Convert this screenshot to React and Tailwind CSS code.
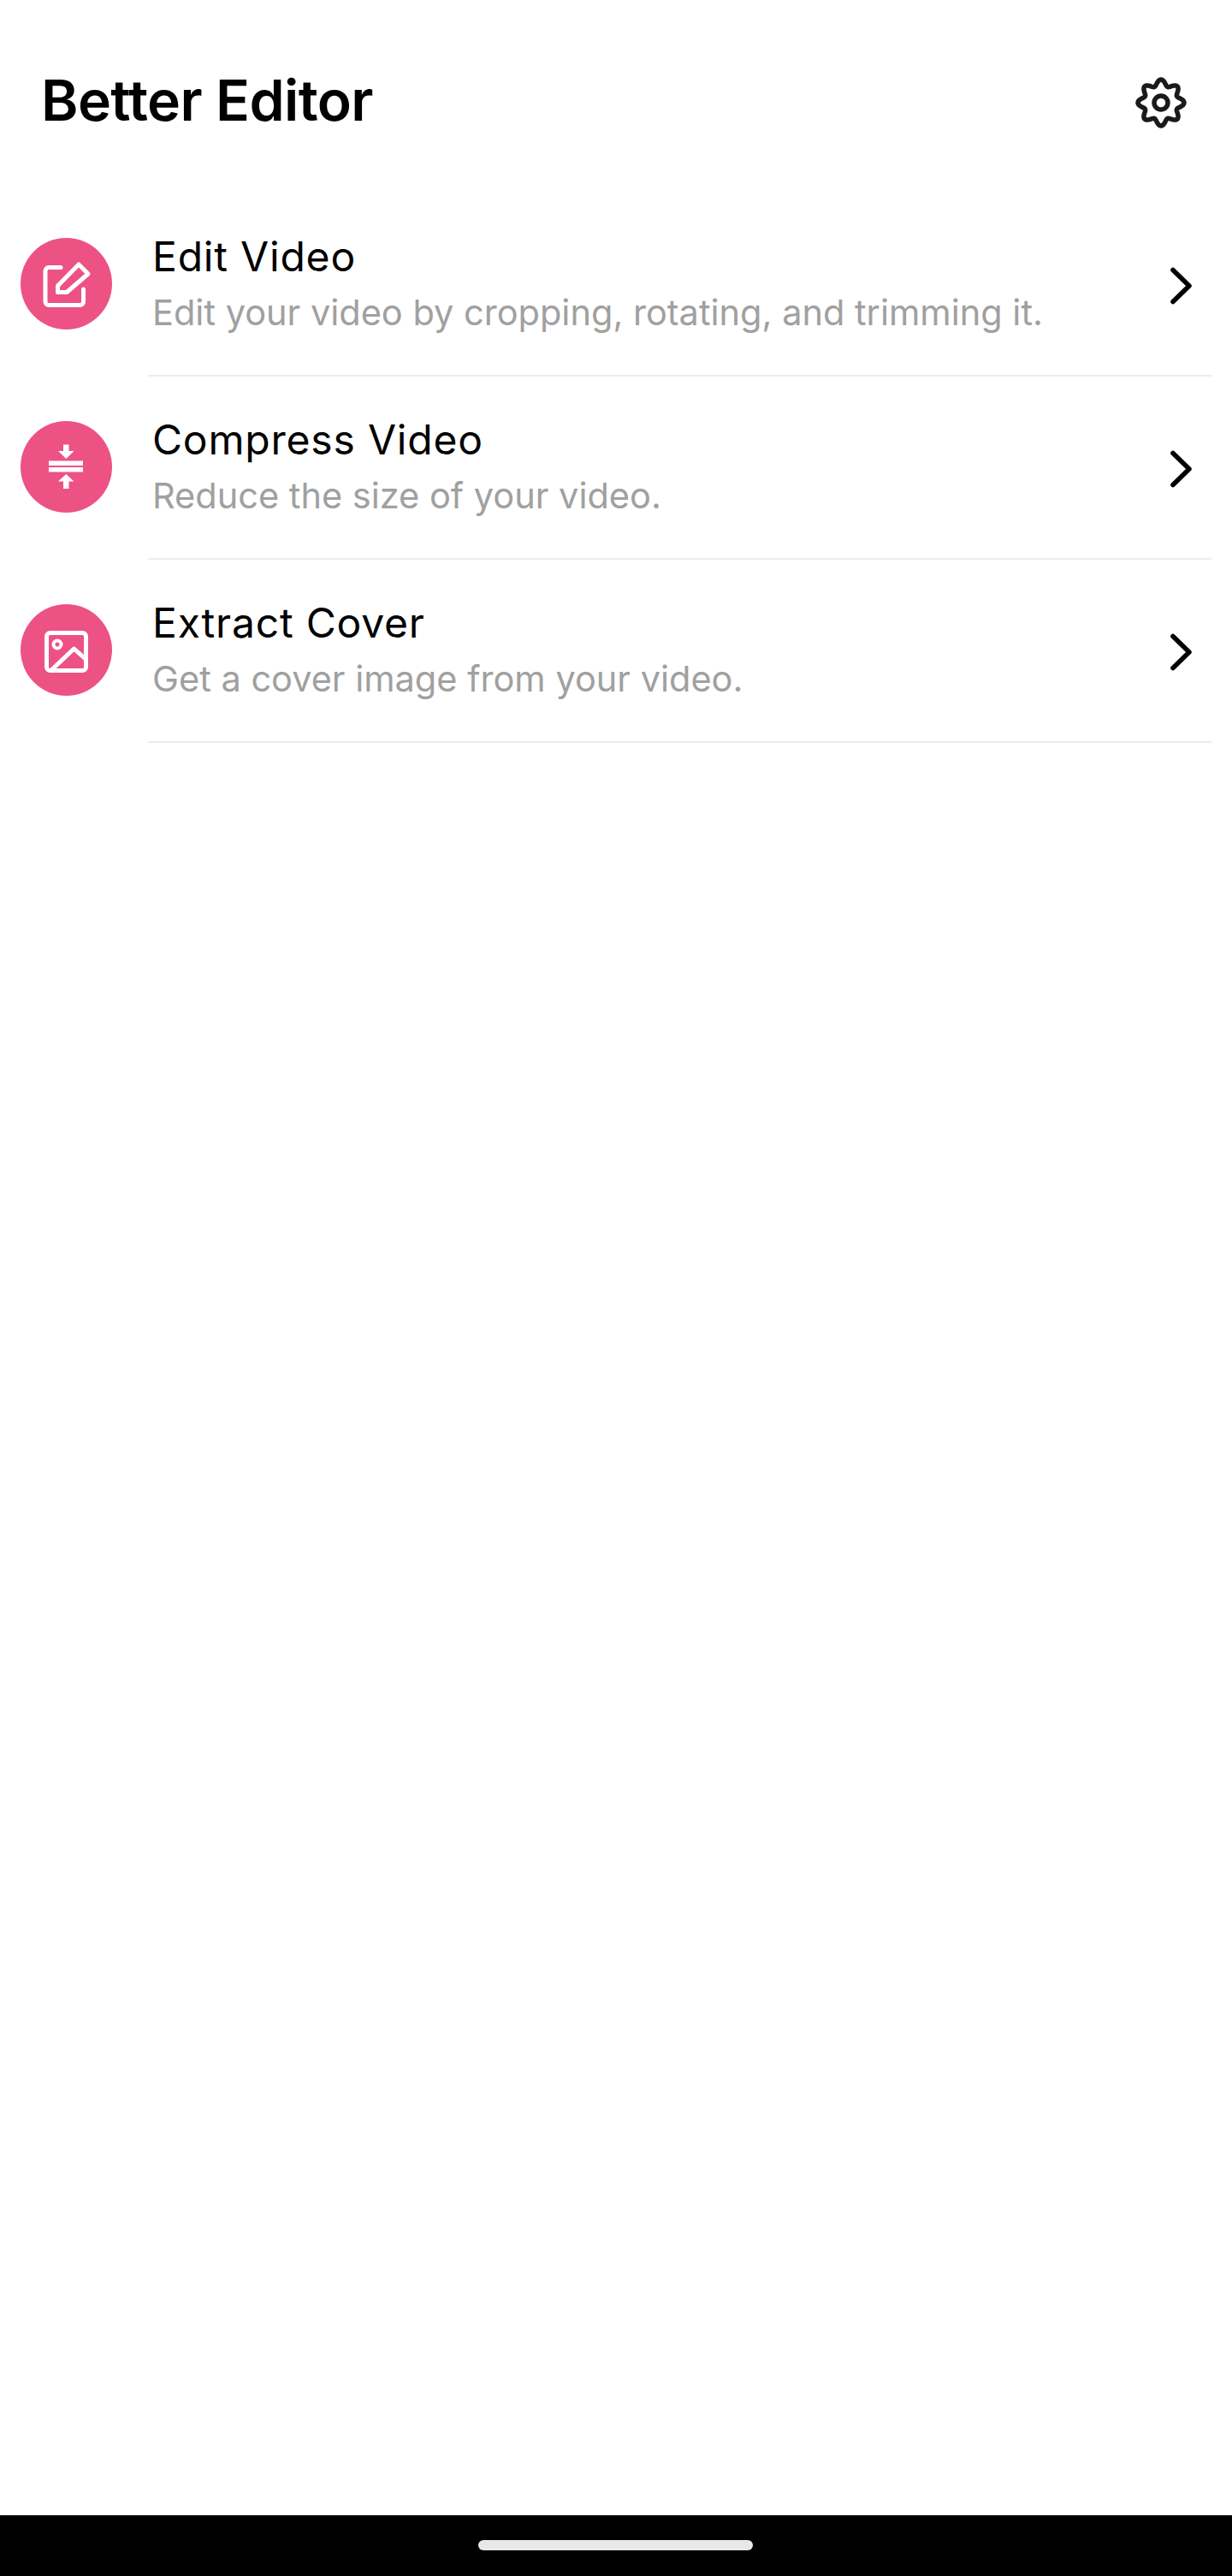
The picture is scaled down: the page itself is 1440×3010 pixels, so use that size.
const font = { fontFamily: 'Inter, "Noto Sans", sans-serif' };

const rows = [
  { title: 'Edit Video', sub: 'Edit your video by cropping, rotating, and trimming it.', icon: 'edit' },
  { title: 'Compress Video', sub: 'Reduce the size of your video.', icon: 'compress' },
  { title: 'Extract Cover', sub: 'Get a cover image from your video.', icon: 'image' },
];

// wavy outline of the 8 tooth gear
const gearPath = () => {
  const pts = [];
  for (let i = 0; i < 160; i++) {
    const a = (i / 160) * Math.PI * 2;
    const r = 23.5 + 3.5 * Math.cos(8 * a);
    pts.push(`${(30 + r * Math.sin(a)).toFixed(2)} ${(30 - r * Math.cos(a)).toFixed(2)}`);
  }
  return `M${pts.join('L')}Z`;
};

const Gear = () => (
  <svg width="60" height="60" viewBox="0 0 60 60" fill="none" stroke="#1a1a1a" strokeWidth="5.5" strokeLinejoin="round">
    <path d={gearPath()} />
    <circle cx="30" cy="30" r="8" />
  </svg>
);

const Chevron = () => (
  <svg width="28" height="44" viewBox="0 0 28 44" fill="none" stroke="#000" strokeWidth="5.5" strokeLinecap="round" strokeLinejoin="round">
    <path d="M4 3.5 L23 22 L4 40.5" />
  </svg>
);

const RowIcon = ({ name }) => {
  if (name === 'edit') {
    return (
      <svg width="107" height="107" viewBox="0 0 107 107" fill="none" stroke="#fff" strokeWidth="5" strokeLinejoin="round" strokeLinecap="round">
        <path d="M47 34.5 H33 a4 4 0 0 0 -4 4 V74.5 a4 4 0 0 0 4 4 H69.5 a4 4 0 0 0 4 -4 V60" />
        <path d="M43.5 56 L68 31 L79 42 L54 63.5 H43.5 Z" />
      </svg>
    );
  }
  if (name === 'compress') {
    return (
      <svg width="107" height="107" viewBox="0 0 107 107" fill="#fff">
        <rect x="33" y="46.5" width="40" height="5.5" />
        <rect x="33" y="54" width="40" height="5.5" />
        <path d="M50 27.5 H56.5 V35 H62.5 L53.3 44 L44 35 H50 Z" />
        <path d="M50 79 H56.5 V70.5 H62.5 L53.3 62 L44 70.5 H50 Z" />
      </svg>
    );
  }
  return (
    <svg width="107" height="107" viewBox="0 0 107 107" fill="none" stroke="#fff" strokeWidth="5" strokeLinejoin="round">
      <rect x="30.5" y="33.5" width="46" height="44" rx="4" />
      <circle cx="43" cy="47" r="4.5" strokeWidth="4" />
      <path d="M36 77 L62.5 52 L77 65" />
    </svg>
  );
};

const Row = ({ title, sub, icon }) => (
  <div className="flex h-[214px] items-center pl-6 pr-[24px]">
    <div className="mb-[3px] h-[107px] w-[107px] shrink-0 rounded-full bg-[#ed5285]">
      <RowIcon name={icon} />
    </div>
    <div className="ml-[42px] flex h-full flex-1 items-center justify-between border-b-2 border-[#ececec] pr-[21px]">
      <div className="pl-[5px] pb-[2px]">
        <div className="text-[48px] leading-[64px] tracking-[0.8px] text-black">{title}</div>
        <div className="mt-[4px] text-[41.5px] leading-[58px] text-[#a0a0a0]">{sub}</div>
      </div>
      <div className="mt-[4px]">
        <Chevron />
      </div>
    </div>
  </div>
);

export default function App() {
  return (
    <div className="flex h-[3010px] w-[1440px] flex-col bg-white" style={font}>
      <header className="flex h-[226px] items-start justify-between pl-[48px] pr-[53px] pt-[90px]">
        <h1 className="text-[66px] font-semibold leading-[55px] tracking-[-0.6px] text-black">Better Editor</h1>
        <Gear />
      </header>
      <main className="flex-1">
        {rows.map((r) => (
          <Row key={r.title} {...r} />
        ))}
      </main>
      <div className="flex h-[71px] justify-center bg-black pr-[2px] pt-[29px]">
        <div className="h-3 w-[321px] rounded-full bg-[#e8e8e8]" />
      </div>
    </div>
  );
}
